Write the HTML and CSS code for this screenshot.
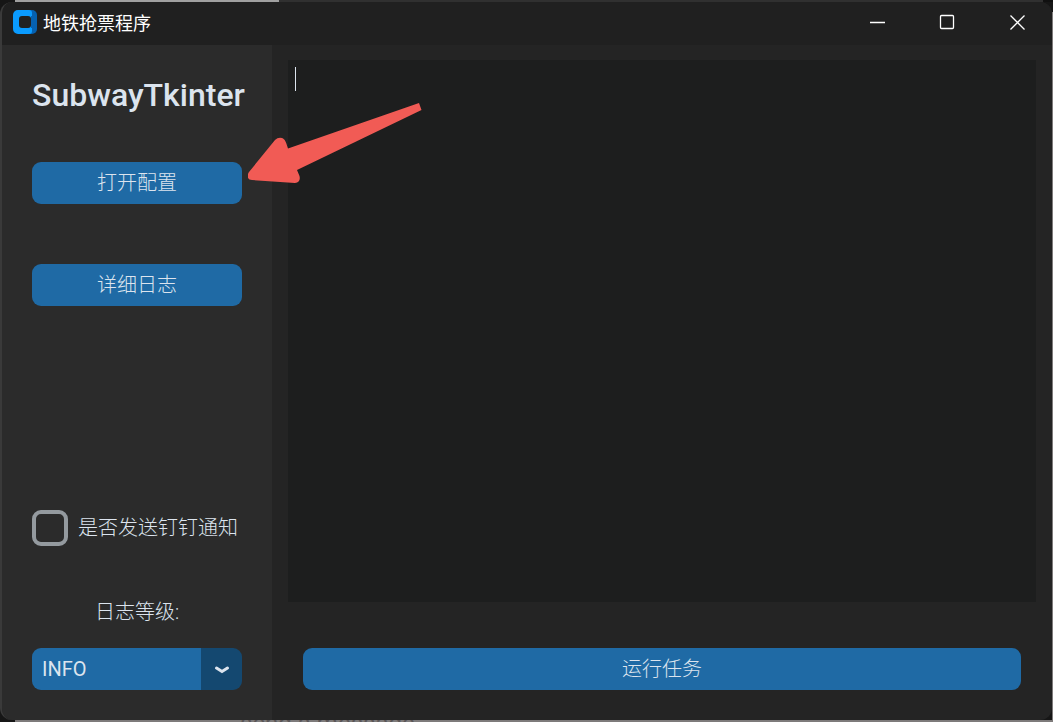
FILE: index.html
```html
<!DOCTYPE html>
<html lang="zh-CN">
<head>
<meta charset="utf-8">
<title>地铁抢票程序</title>
<link rel="stylesheet" href="styles.css">
</head>
<body>
<div class="window">
  <header class="titlebar">
    <svg class="logo" viewBox="0 0 24 24" aria-hidden="true">
      <rect x="10" width="14" height="24" rx="5" fill="#0661b0"/>
      <path d="M5 0h11a3 3 0 0 1 3 3v18a3 3 0 0 1-3 3H5a5 5 0 0 1-5-5V5a5 5 0 0 1 5-5z" fill="#0a9bff"/>
      <path d="M18 6h2v12h-2z" fill="#0661b0"/>
      <rect x="6" y="6" width="12" height="12" rx="3" fill="#212121"/>
    </svg>
    <span class="app-name">地铁抢票程序</span>
    <div class="controls">
      <button class="control" type="button" aria-label="最小化"><svg viewBox="0 0 16 16"><path d="M1 8.500h15"/></svg></button>
      <button class="control" type="button" aria-label="最大化"><svg viewBox="0 0 16 16"><rect x="1.500" y="1.500" width="13" height="13" rx="1"/></svg></button>
      <button class="control" type="button" aria-label="关闭"><svg viewBox="0 0 16 16"><path d="M1.500 1.500l14 14M15.500 1.500l-14 14"/></svg></button>
    </div>
  </header>
  <div class="content">
    <aside class="sidebar">
      <h1 class="heading">SubwayTkinter</h1>
      <div class="callout">
        <button class="button" type="button">打开配置</button>
        <svg class="arrow" viewBox="0 0 176 82" aria-hidden="true">
          <path d="M171 1L40 46.500C38 40 37 37 34 36Q30 35 27 38L1 70Q-1 73 0 76Q1 78 4 78L47 81Q53 80 51.500 74L49 68L173.500 8z" fill="#f15b55"/>
        </svg>
      </div>
      <button class="button" type="button">详细日志</button>
      <label class="check"><input class="box" type="checkbox">是否发送钉钉通知</label>
      <label class="level-label" for="level">日志等级:</label>
      <div class="select-wrap">
        <select class="select" id="level"><option>INFO</option><option>DEBUG</option><option>ERROR</option></select>
        <svg class="chevron" viewBox="0 0 16 10" aria-hidden="true"><path d="M2.500 3L8 6.500L13.500 3"/></svg>
      </div>
    </aside>
    <main class="main">
      <div class="log-wrap">
        <textarea class="log" aria-label="日志" spellcheck="false"></textarea>
        <span class="caret"></span>
      </div>
      <button class="button run" type="button">运行任务</button>
    </main>
  </div>
</div>
<div class="behind">send a message</div>
</body>
</html>
```
FILE: styles.css
```css
* { box-sizing: border-box; }

body {
  margin: 0;
  height: 100vh;
  padding: 2px 1px 0 0;
  display: flex;
  flex-direction: column;
  background:
    linear-gradient(#a0a0a0, #a0a0a0) 15px 0 / 264px 2px no-repeat,
    linear-gradient(#7e7b7b, #7e7b7b) 100% 12px / 1px 100% no-repeat,
    linear-gradient(to right, #161616 15px, #303030 15px calc(100% - 10px), #101010 0) 0 0 / 100% 2px no-repeat,
    #161616;
  color: #dce4ee;
  font-family: Roboto, "Noto Sans CJK SC", sans-serif;
  font-size: 20px;
  font-weight: 300;
}

button, select, textarea, input { font: inherit; color: inherit; margin: 0; }

.window {
  flex: 1;
  min-height: 0;
  display: flex;
  flex-direction: column;
  border-left: 2px solid #3a3a3a;
  border-radius: 12px;
  overflow: hidden;
  background: #242424;
}

.behind {
  flex: none;
  height: 2px;
  margin-left: 15px;
  padding-left: 225px;
  overflow: hidden;
  background: #7e7b7b;
  color: #5a5657;
  font-size: 24px;
  font-weight: 400;
  line-height: 6px;
}

.titlebar {
  display: flex;
  align-items: center;
  height: 43px;
  flex: none;
  padding: 0 0 3px 11px;
  background: #202020;
}

.logo { width: 24px; height: 24px; margin-right: 6px; }

.app-name {
  color: #fff;
  font-family: "Noto Sans CJK SC", sans-serif;
  font-size: 18px;
  font-weight: 400;
}

.controls { display: flex; margin-left: auto; }

.control {
  width: 70px;
  height: 40px;
  padding: 0;
  border: 0;
  background: none;
  display: grid;
  place-items: center;
}

.control svg {
  width: 16px;
  height: 16px;
  fill: none;
  stroke: #fff;
  stroke-width: 1.300;
}

.content { flex: 1; display: flex; min-height: 0; }

.sidebar {
  width: 270px;
  flex: none;
  display: flex;
  flex-direction: column;
  padding: 29px 30px 30px;
  background: #2b2b2b;
}

.heading {
  margin: 0 0 46px;
  font-size: 32px;
  line-height: 42px;
  font-weight: 500;
  text-align: center;
  white-space: nowrap;
}

.button {
  display: block;
  width: 100%;
  height: 42px;
  padding: 0;
  border: 0;
  border-radius: 9px;
  background: #1f6aa5;
  line-height: 42px;
}

.callout { position: relative; margin-bottom: 60px; }

.arrow {
  position: absolute;
  z-index: 1;
  left: 216px;
  top: -60px;
  width: 176px;
  height: 82px;
}

.check {
  display: flex;
  align-items: center;
  gap: 10px;
  margin-top: auto;
  line-height: 36px;
  white-space: nowrap;
}

.box {
  appearance: none;
  width: 36px;
  height: 36px;
  border: 4px solid #949a9f;
  border-radius: 9px;
}

.level-label {
  margin: 45px 0 15px;
  line-height: 42px;
  text-align: center;
}

.select-wrap { position: relative; }

.select {
  appearance: none;
  display: block;
  width: 100%;
  height: 42px;
  padding: 0 50px 0 10px;
  border: 0;
  border-radius: 9px;
  background: linear-gradient(to left, #144870 41px, #1f6aa5 41px);
  font-weight: 400;
}

.chevron {
  position: absolute;
  right: 12px;
  top: 17px;
  width: 16px;
  height: 10px;
  fill: none;
  stroke: #dce4ee;
  stroke-width: 3;
  stroke-linecap: round;
  pointer-events: none;
}

.main {
  flex: 1;
  min-width: 0;
  display: flex;
  flex-direction: column;
  gap: 46px;
  padding: 15px 16px 30px;
}

.log-wrap { position: relative; flex: 1; display: flex; }

.log {
  flex: 1;
  resize: none;
  border: 0;
  outline: 0;
  padding: 8px;
  background: #1d1e1e;
}

.caret {
  position: absolute;
  left: 7px;
  top: 7px;
  width: 1px;
  height: 24px;
  background: #dce4ee;
}

.run { width: auto; margin: 0 15px; }
```
